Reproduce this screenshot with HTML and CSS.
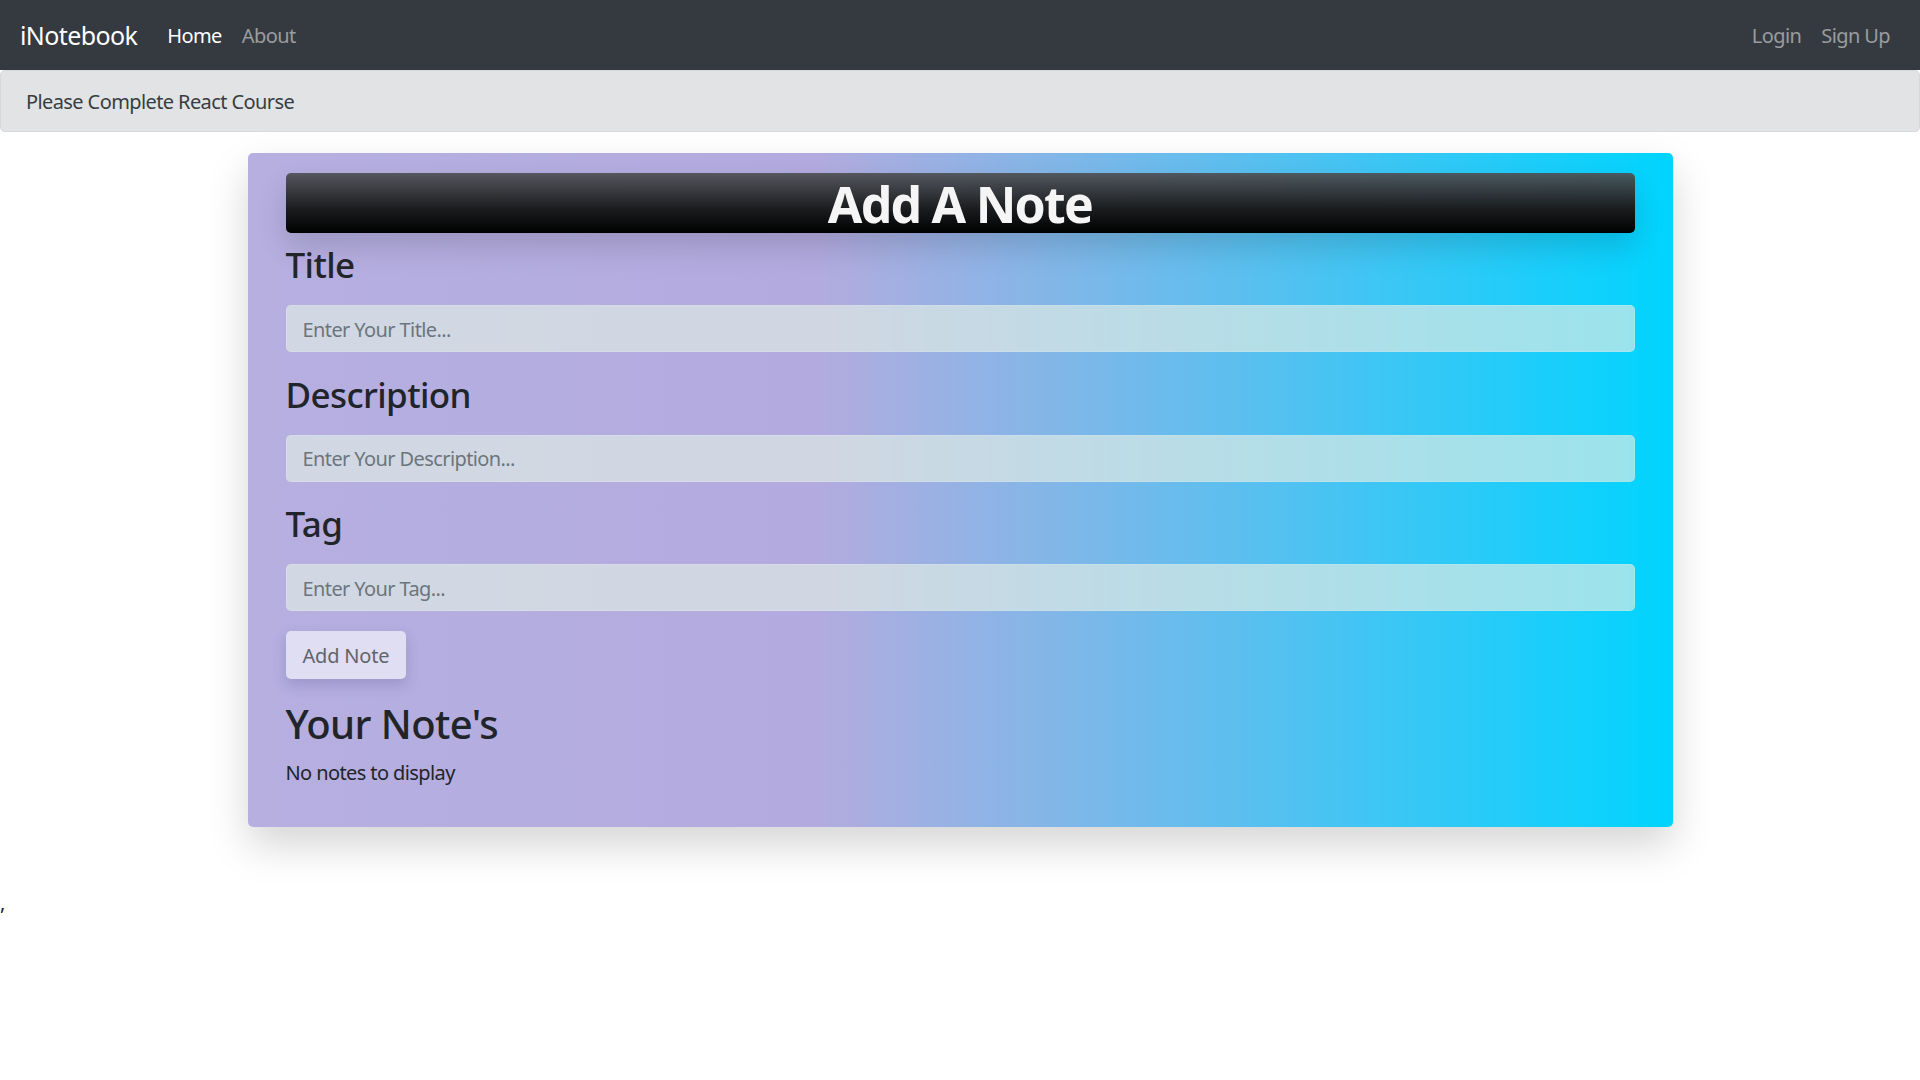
FILE: index.html
```html
<!DOCTYPE html>
<html lang="en">
<head>
<meta charset="utf-8">
<title>iNotebook</title>
<link rel="stylesheet" href="styles.css">
</head>
<body>
<nav class="navbar">
  <a class="brand" href="#">iNotebook</a>
  <ul class="nav-links">
    <li><a class="nav-link active" href="#">Home</a></li>
    <li><a class="nav-link" href="#">About</a></li>
  </ul>
  <div class="nav-auth">
    <a class="nav-link" href="#">Login</a>
    <a class="nav-link" href="#">Sign Up</a>
  </div>
</nav>
<div class="alert">Please Complete React Course</div>
<main class="card">
  <h1 class="card-title">Add A Note</h1>
  <form class="note-form">
    <div class="group first">
      <label class="label" for="title">Title</label>
      <input class="field" id="title" type="text" placeholder="Enter Your Title...">
    </div>
    <div class="group">
      <label class="label" for="description">Description</label>
      <input class="field" id="description" type="text" placeholder="Enter Your Description...">
    </div>
    <div class="group">
      <label class="label" for="tag">Tag</label>
      <input class="field" id="tag" type="text" placeholder="Enter Your Tag...">
    </div>
    <button class="add-btn" type="button">Add Note</button>
  </form>
  <h2 class="notes-title">Your Note's</h2>
  <p class="empty">No notes to display</p>
</main>
<div class="stray">,</div>
</body>
</html>
```
FILE: styles.css
```css
* { box-sizing: border-box; }
html, body { margin: 0; padding: 0; }
body {
  font-family: "Noto Sans", "Open Sans", sans-serif;
  font-size: 20px;
  line-height: 1.5;
  letter-spacing: -0.03em;
  color: #212529;
  background: #fff;
}
a { text-decoration: none; }

.navbar {
  display: flex;
  align-items: center;
  height: 70px;
  padding: 11px 20px 9px;
  background: #343a40;
}
.brand {
  font-size: 25px;
  line-height: 37.5px;
  padding: 6px 0;
  margin-right: 20px;
  color: #fff;
}
.nav-links {
  display: flex;
  list-style: none;
  margin: 0;
  padding: 0;
}
.nav-link {
  display: block;
  padding: 10px 10px;
  font-size: 20px;
  line-height: 30px;
  color: rgba(255,255,255,.5);
}
.nav-link.active { color: #fff; }
.nav-auth {
  display: flex;
  margin-left: auto;
}

.alert {
  height: 62px;
  padding: 16px 25px 14px;
  background: #e2e3e5;
  border: 1px solid #d6d8db;
  border-radius: 5px;
  color: #383d41;
  line-height: 30px;
}

.card {
  width: 1425px;
  margin: 21px auto 61px;
  padding: 20px 38px 19px;
  border-radius: 5px;
  background: linear-gradient(90deg, #b6afe0 0%, #b3abdf 40%, #00d4ff 100%);
  box-shadow: 0 18px 40px rgba(0,0,0,.17);
}
.card-title {
  margin: 0;
  height: 60px;
  line-height: 62px;
  font-size: 50px;
  font-weight: 700;
  letter-spacing: -0.035em;
  text-align: center;
  color: #f5f5f5;
  border-radius: 5px;
  background: linear-gradient(180deg, rgba(78,80,84,.92) 0%, #1a1c1e 60%, #000 100%);
  box-shadow: 0 14px 30px rgba(0,0,0,.14);
}
.group { margin-top: 21.5px; }
.group.first { margin-top: 11px; }
.label {
  display: block;
  font-size: 35px;
  line-height: 42px;
  font-weight: 500;
  margin-bottom: 19px;
  color: #212529;
}
.field {
  display: block;
  width: 100%;
  height: 47px;
  padding: 1px 16px 0;
  border: 1px solid rgba(255,255,255,.12);
  border-radius: 5px;
  background: rgba(221,235,228,.69);
  font-family: inherit;
  font-size: 20px;
  letter-spacing: inherit;
  color: #495057;
  outline: none;
}
.field::placeholder { color: #6c757d; }
.add-btn {
  display: block;
  margin-top: 20px;
  height: 47.5px;
  padding: 1px 17px 0;
  border: none;
  border-radius: 5px;
  background: #e0def2;
  color: #5f656b;
  font-family: inherit;
  font-size: 20px;
  letter-spacing: -0.01em;
  box-shadow: 0 6px 14px rgba(70,60,120,.22);
}
.notes-title {
  margin: 21.5px 0 8px;
  font-size: 40px;
  line-height: 48px;
  font-weight: 500;
}
.empty {
  margin: 0 0 20px;
  padding-top: 2px;
  line-height: 30px;
}
.stray {
  line-height: 30px;
  color: #212529;
}
```
